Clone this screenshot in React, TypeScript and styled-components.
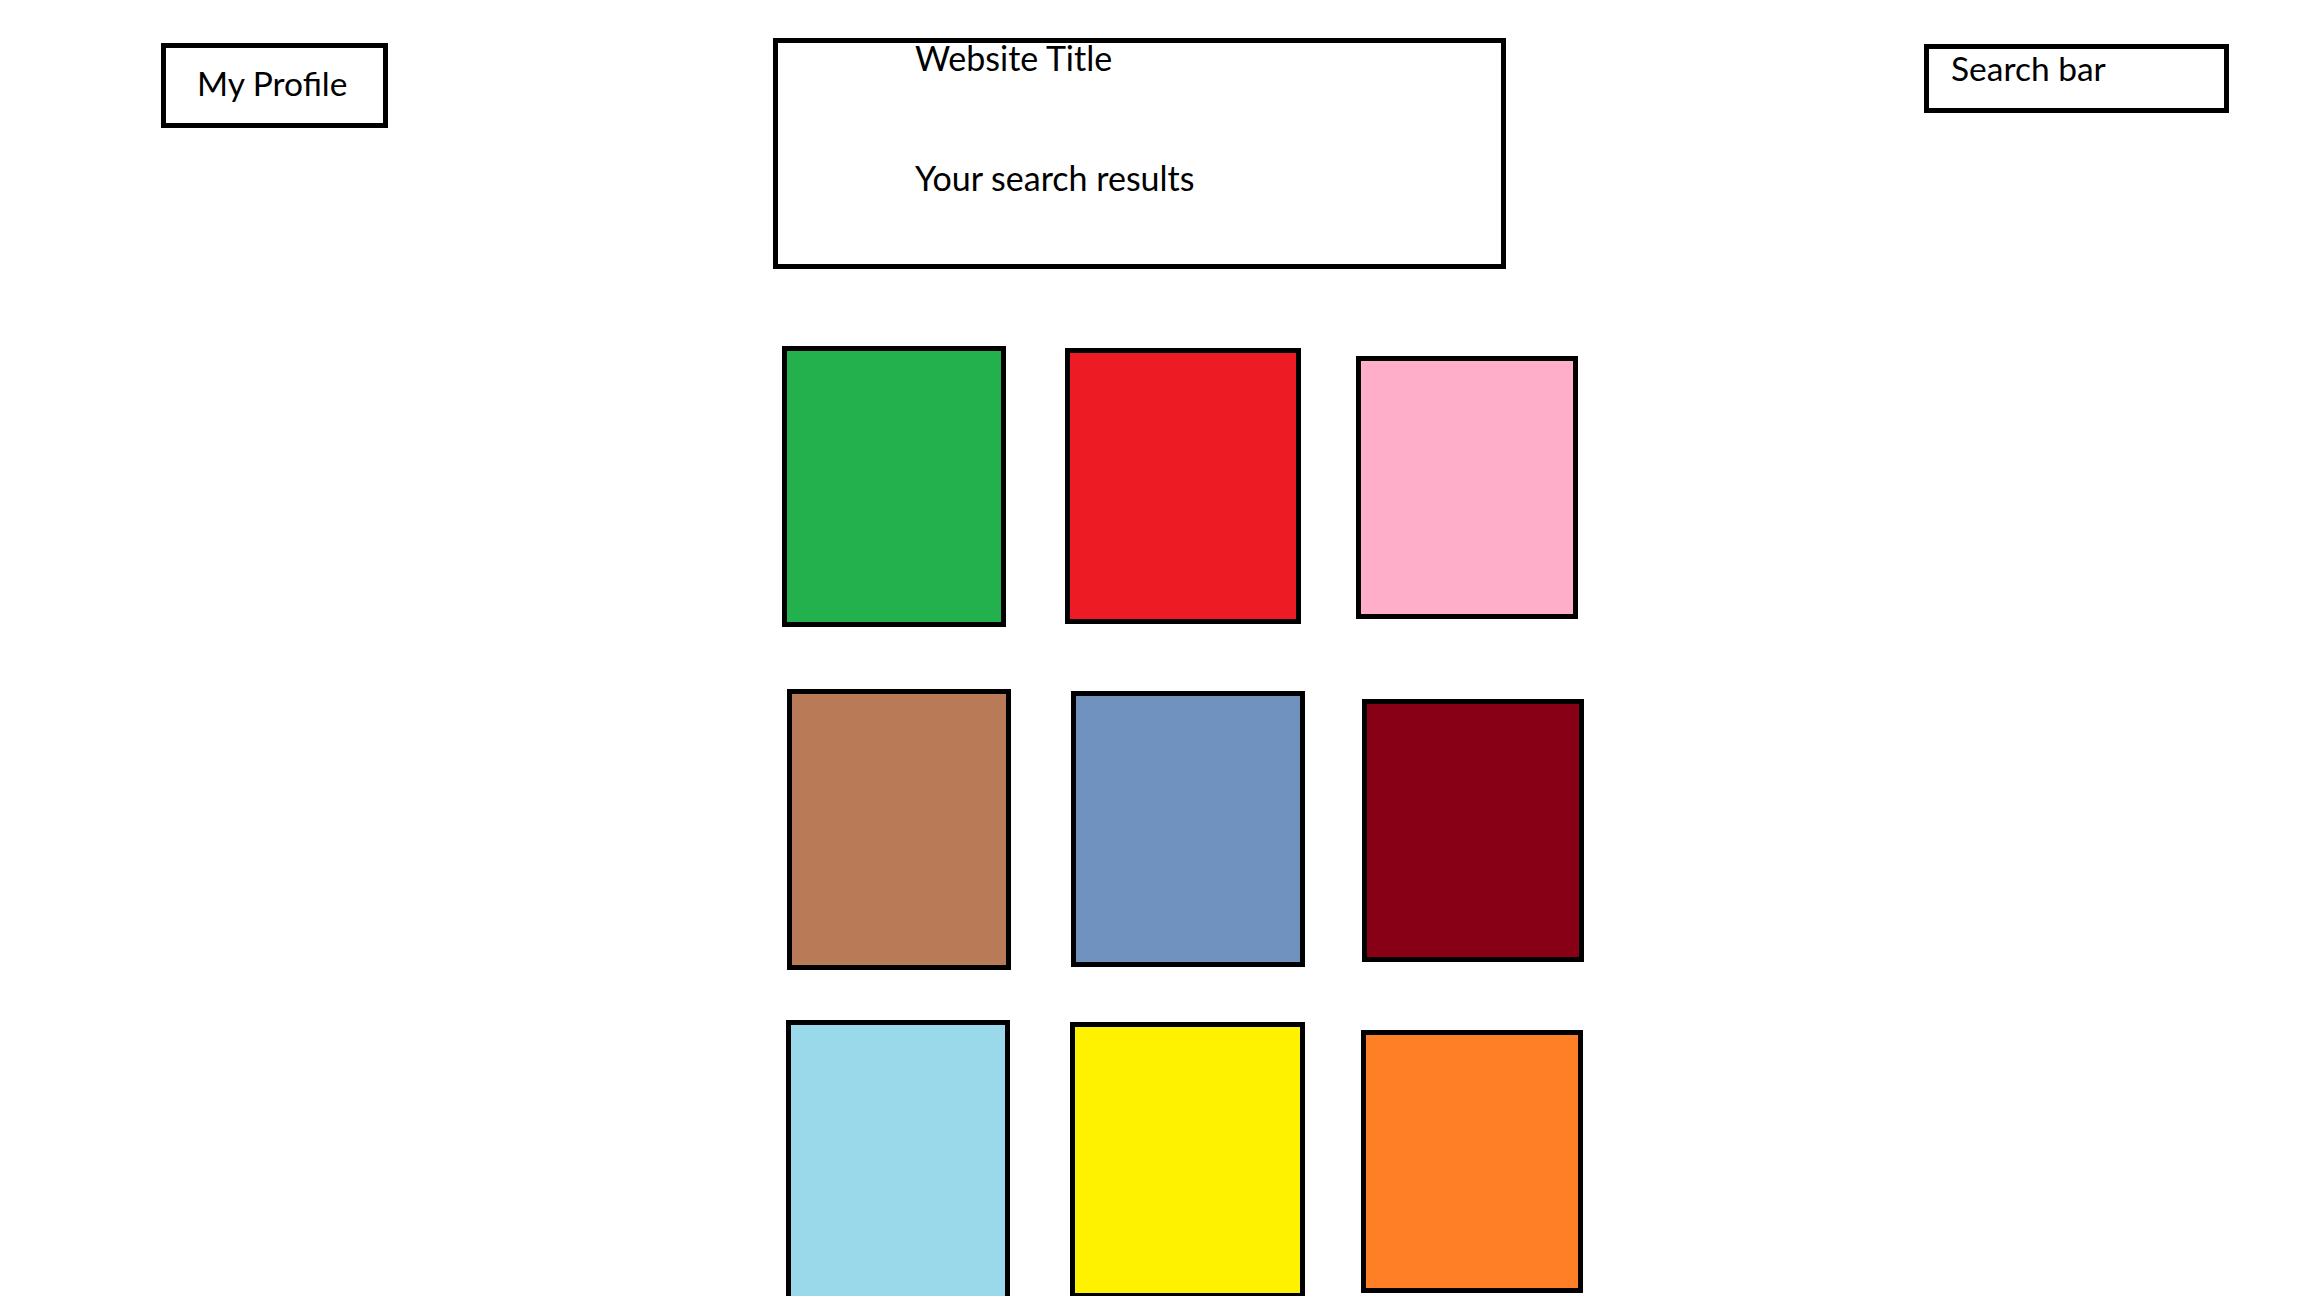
import React from 'react';
import styled, {createGlobalStyle} from "styled-components";

const GlobalStyle = createGlobalStyle`
  html, body {
    margin: 0;
    padding: 0;
    background: #ffffff;
  }
  body {
    font-family: Lato, "Open Sans", sans-serif;
    color: #000;
  }
  * {
    box-sizing: border-box;
  }
`;

const Page = styled.div`
  width: 2304px;
  height: 1296px;
  overflow: hidden;
  background: #fff;
`;

const Header = styled.header`
  display: flex;
  align-items: flex-start;
  padding-left: 161px;
`;

const ProfileButton = styled.div`
  margin-top: 43px;
  width: 227px;
  height: 85px;
  border: 5px solid #000;
  display: flex;
  align-items: center;
  padding-left: 31px;
  padding-bottom: 6px;
  font-size: 33.5px;
`;

const TitleBox = styled.div`
  margin-top: 38px;
  margin-left: 385px;
  width: 733px;
  height: 231px;
  border: 5px solid #000;
  padding-left: 137px;
  font-size: 34px;
`;

const TitleLine = styled.div<{ $top: number }>`
  margin-top: ${p => p.$top}px;
  line-height: 36px;
`;

const SearchBar = styled.div`
  margin-top: 44px;
  margin-left: 418px;
  width: 305px;
  height: 69px;
  border: 5px solid #000;
  padding-left: 22px;
  padding-top: 1px;
  line-height: 36px;
  font-size: 33.5px;
`;

const Results = styled.div`
  margin-top: 77px;
  margin-left: 782px;
  display: grid;
  grid-template-columns: 283px 291px 240px;
  grid-template-rows: 343px 331px 300px;
`;

const Tile = styled.div<{ $color: string; $w: number; $h: number; $dx: number; $dy: number }>`
  width: ${p => p.$w}px;
  height: ${p => p.$h}px;
  margin-left: ${p => p.$dx}px;
  margin-top: ${p => p.$dy}px;
  background: ${p => p.$color};
  border: 5px solid #000;
`;

const tiles = [
    {color: "#22b14c", w: 224, h: 281, dx: 0, dy: 0},
    {color: "#ed1c24", w: 236, h: 276, dx: 0, dy: 2},
    {color: "#ffaec9", w: 222, h: 263, dx: 0, dy: 10},
    {color: "#b97a57", w: 224, h: 281, dx: 5, dy: 0},
    {color: "#7092be", w: 234, h: 276, dx: 6, dy: 2},
    {color: "#880015", w: 222, h: 263, dx: 6, dy: 10},
    {color: "#99d9ea", w: 224, h: 290, dx: 4, dy: 0},
    {color: "#fff200", w: 235, h: 276, dx: 5, dy: 2},
    {color: "#ff7f27", w: 222, h: 263, dx: 5, dy: 10},
];

function App() {
    return (
        <Page>
            <GlobalStyle/>
            <Header>
                <ProfileButton>My Profile</ProfileButton>
                <TitleBox>
                    <TitleLine $top={-3}>Website Title</TitleLine>
                    <TitleLine $top={84}>Your search results</TitleLine>
                </TitleBox>
                <SearchBar>Search bar</SearchBar>
            </Header>

            <Results>
                {tiles.map((t, i) => (
                    <Tile key={i} $color={t.color} $w={t.w} $h={t.h} $dx={t.dx} $dy={t.dy}/>
                ))}
            </Results>
        </Page>
    );
}

export default App;
